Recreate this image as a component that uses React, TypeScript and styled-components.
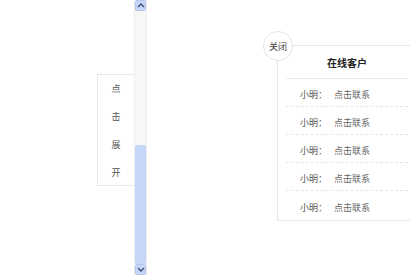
import React from "react"
import styled, { createGlobalStyle } from "styled-components"

const rows = ["小明", "小明", "小明", "小明", "小明"]

export default () => {
  return (
    <>
      <Global />
      <Page>
        <Tab>
          {["点", "击", "展", "开"].map(c => (
            <TabChar key={c}>{c}</TabChar>
          ))}
        </Tab>
        <ScrollBar>
          <ArrowBtn>
            <svg width="8" height="5" viewBox="0 0 8 5">
              <path d="M1 4 L4 1 L7 4" fill="none" stroke="#3a4a7a" strokeWidth="1.4" />
            </svg>
          </ArrowBtn>
          <Track>
            <Thumb />
          </Track>
          <ArrowBtn>
            <svg width="8" height="5" viewBox="0 0 8 5">
              <path d="M1 1 L4 4 L7 1" fill="none" stroke="#3a4a7a" strokeWidth="1.4" />
            </svg>
          </ArrowBtn>
        </ScrollBar>
        <Panel>
          <Close>关闭</Close>
          <Header>在线客户</Header>
          <List>
            {rows.map((name, i) => (
              <Row key={i} last={i === rows.length - 1}>
                <Name>{name}：</Name>
                <Link>点击联系</Link>
              </Row>
            ))}
          </List>
        </Panel>
      </Page>
    </>
  )
}

const Global = createGlobalStyle`
  html, body {
    margin: 0;
    padding: 0;
    background: #fff;
    overflow: hidden;
    font-family: "Noto Sans CJK SC", "Liberation Sans", sans-serif;
  }
`

const Page = styled.div`
  display: flex;
  align-items: flex-start;
  width: 410px;
  height: 275px;
  padding-left: 97px;
  box-sizing: border-box;
  overflow: hidden;
`

const Tab = styled.div`
  flex: none;
  margin-top: 74px;
  width: 37px;
  height: 112px;
  box-sizing: border-box;
  border: 1px solid #e8e8e8;
  border-right: none;
  display: flex;
  flex-direction: column;
  align-items: center;
`

const TabChar = styled.div`
  height: 28px;
  line-height: 28px;
  font-size: 9px;
  color: #555;
`

const ScrollBar = styled.div`
  flex: none;
  width: 13px;
  height: 275px;
  display: flex;
  flex-direction: column;
  background: #f7f7f7;
  border-left: 1px solid #ededed;
  border-right: 1px solid #ededed;
  box-sizing: border-box;
`

const ArrowBtn = styled.div`
  height: 11px;
  display: flex;
  align-items: center;
  justify-content: center;
  background: #c9d7f7;
  border: 1px solid #b4c6ee;
  border-radius: 2px;
  box-sizing: border-box;
`

const Track = styled.div`
  flex: 1;
  display: flex;
  flex-direction: column;
  justify-content: flex-end;
`

const Thumb = styled.div`
  height: 119px;
  background: #c6d6f8;
  border-radius: 2px;
`

const Panel = styled.div`
  position: relative;
  flex: none;
  margin-top: 45px;
  margin-left: 130px;
  width: 140px;
  height: 176px;
  box-sizing: border-box;
  border: 1px solid #e6e6e6;
  background: #fff;
  display: flex;
  flex-direction: column;
`

const Close = styled.div`
  position: absolute;
  left: -15px;
  top: -15px;
  width: 28px;
  height: 28px;
  border-radius: 50%;
  border: 1px solid #e3e3e3;
  background: #fff;
  display: flex;
  align-items: center;
  justify-content: center;
  font-size: 9px;
  color: #444;
`

const Header = styled.div`
  height: 32px;
  margin: 0 8px;
  border-bottom: 1px solid #ececec;
  display: flex;
  align-items: center;
  justify-content: center;
  font-size: 10px;
  font-weight: bold;
  color: #222;
`

const List = styled.div`
  display: flex;
  flex-direction: column;
  padding: 0 8px;
`

const Row = styled.div<{ last?: boolean }>`
  height: 28px;
  display: flex;
  align-items: center;
  padding-left: 14px;
  padding-top: 4px;
  box-sizing: border-box;
  border-bottom: ${p => (p.last ? "none" : "1px dashed #e6e6e6")};
  font-size: 9px;
`

const Name = styled.span`
  color: #555;
  width: 34px;
`

const Link = styled.span`
  color: #666;
`
